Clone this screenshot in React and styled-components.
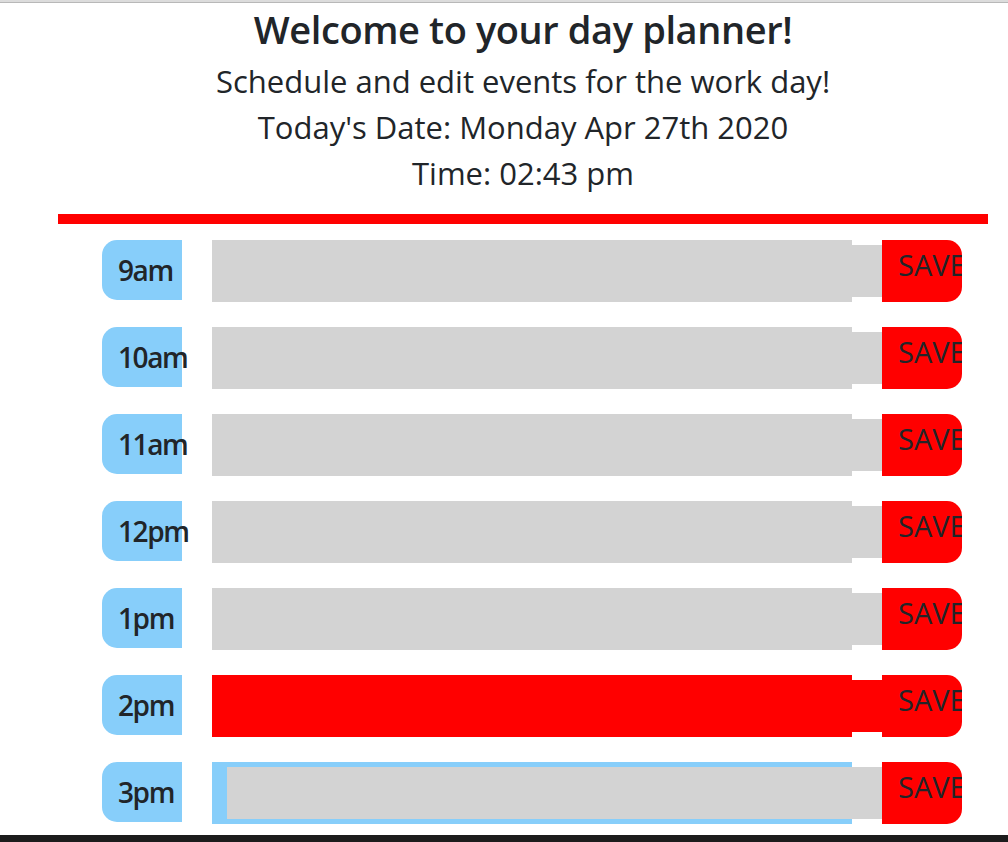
import React from "react";
import styled, { createGlobalStyle } from "styled-components";

const GlobalStyle = createGlobalStyle`
	html, body {
		margin: 0;
		padding: 0;
		background: #fff;
		overflow: hidden;
	}

	body {
		font-family: "Open Sans", "Noto Sans", sans-serif;
		color: #212529;
	}
`;

const TopEdge = styled.div`
	height: 2px;
	background: #dcdcdc;
	border-bottom: 1px solid #b8b8b8;
`;

const Container = styled.div`
	width: 930px;
	margin-left: 58px;
`;

const Header = styled.header`
	display: flex;
	flex-direction: column;
	align-items: center;
	padding-bottom: 18px;
	border-bottom: 10px solid #ff0000;
`;

const Title = styled.h1`
	margin: 0;
	font-size: 38px;
	font-weight: 600;
	letter-spacing: -0.4px;
	line-height: 52px;
`;

const Line = styled.p`
	margin: 0;
	font-size: 31px;
	font-weight: 500;
	line-height: 46px;
	margin-top: ${({ first }) => (first ? "3px" : "0")};
`;

const Schedule = styled.section`
	display: flex;
	flex-direction: column;
	gap: 25px;
	padding: 16px 0 0 44px;
`;

const Row = styled.div`
	display: grid;
	grid-template-columns: 80px 640px 80px;
	column-gap: 30px;
	height: 62px;
`;

const Hour = styled.div`
	height: 60px;
	display: flex;
	align-items: center;
	padding-left: 16px;
	background: #87cefa;
	border-radius: 15px 0 0 15px;
	font-size: 28px;
	font-weight: 600;
	letter-spacing: -1.4px;
	white-space: nowrap;
`;

const Slot = styled.div`
	background: ${({ outer }) => outer};
	padding: 5px 0 5px ${({ inset }) => (inset ? "15px" : "0")};
`;

const Entry = styled.textarea`
	display: block;
	width: ${({ inset }) => (inset ? "655px" : "670px")};
	height: 52px;
	margin: 0;
	padding: 0;
	border: 0;
	outline: none;
	resize: none;
	background: ${({ fill }) => fill};
	font-family: inherit;
`;

const SaveButton = styled.button`
	display: flex;
	align-items: flex-start;
	overflow: hidden;
	margin: 0;
	padding: 4px 0 0 16px;
	border: 0;
	border-radius: 0 15px 15px 0;
	background: #ff0000;
	color: #212529;
	font-family: inherit;
	font-size: 29px;
	line-height: 42px;
	white-space: nowrap;
	position: relative;
	z-index: 1;
`;

const BottomBar = styled.div`
	position: fixed;
	left: 0;
	right: 0;
	bottom: 0;
	height: 7px;
	background: #1c1c1c;
	z-index: 2;
`;

const hours = [
	{ label: "9am", outer: "#d3d3d3", fill: "#d3d3d3" },
	{ label: "10am", outer: "#d3d3d3", fill: "#d3d3d3" },
	{ label: "11am", outer: "#d3d3d3", fill: "#d3d3d3" },
	{ label: "12pm", outer: "#d3d3d3", fill: "#d3d3d3" },
	{ label: "1pm", outer: "#d3d3d3", fill: "#d3d3d3" },
	{ label: "2pm", outer: "#ff0000", fill: "#ff0000" },
	{ label: "3pm", outer: "#87cefa", fill: "#d3d3d3", inset: true },
];

export default function App() {
	return (
		<>
			<GlobalStyle />
			<TopEdge />
			<Container>
				<Header>
					<Title>Welcome to your day planner!</Title>
					<Line first>Schedule and edit events for the work day!</Line>
					<Line>Today's Date: Monday Apr 27th 2020</Line>
					<Line>Time: 02:43 pm</Line>
				</Header>

				<Schedule>
					{hours.map(h => (
						<Row key={h.label}>
							<Hour>{h.label}</Hour>
							<Slot outer={h.outer} inset={h.inset}>
								<Entry fill={h.fill} inset={h.inset} />
							</Slot>
							<SaveButton>SAVE</SaveButton>
						</Row>
					))}
				</Schedule>
			</Container>
			<BottomBar />
		</>
	);
}
